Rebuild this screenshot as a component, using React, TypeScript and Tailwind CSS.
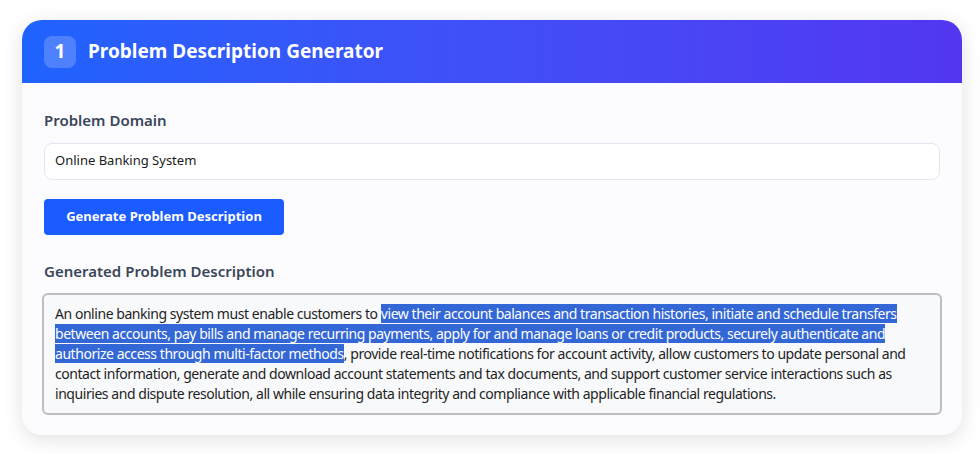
export default function App() {
  return (
    <div
      className="min-h-screen bg-white px-[22px] pt-5 pb-5"
      style={{ fontFamily: '"Noto Sans", "Open Sans", sans-serif' }}
    >
      <div className="w-[940px] overflow-hidden rounded-[20px] bg-[#fcfcfe] shadow-[0_4px_20px_rgba(0,0,0,0.12)]">
        <div className="flex h-[63px] items-center gap-3 bg-gradient-to-r from-[#1e63fe] to-[#5236f1] px-[22px]">
          <div className="flex h-8 w-8 items-center justify-center rounded-lg bg-white/20 text-[19px] font-bold text-white">
            1
          </div>
          <h1 className="text-[19px] font-bold text-white">Problem Description Generator</h1>
        </div>

        <div className="px-[22px] pt-[26px] pb-[20px]">
          <label className="block text-[15px] font-semibold text-[#3a4659]">Problem Domain</label>
          <div className="mt-[11px] flex h-[37px] items-center rounded-lg border border-[#e2e4f0] bg-white px-[10px] text-[13px] text-[#1b1b1b]">
            Online Banking System
          </div>

          <button className="mt-[19px] h-9 w-[240px] rounded-[4px] bg-[#1a5cff] text-[13px] font-bold text-white">
            Generate Problem Description
          </button>

          <label className="mt-[25px] block text-[15px] font-semibold text-[#3a4659]">
            Generated Problem Description
          </label>
          <div className="mt-[11px] -mx-[2px] whitespace-nowrap rounded-md border-2 border-[#bdbdbd] bg-[#f8f9fb] px-[11px] pt-[9px] pb-[9px] text-[14px] leading-[20px] tracking-[-0.45px] text-[#1f1f1f]">
            An online banking system must enable customers to{" "}
            <span className="bg-[#3367d6] text-white">
              view their account balances and transaction histories, initiate and schedule transfers{" "}
              <br />
              between accounts, pay bills and manage recurring payments, apply for and manage loans or credit
              products, securely authenticate and{" "}
              <br />
              authorize access through multi-factor methods
            </span>
            , provide real-time notifications for account activity, allow customers to update personal and
            <br />
            contact information, generate and download account statements and tax documents, and support customer
            service interactions such as
            <br />
            inquiries and dispute resolution, all while ensuring data integrity and compliance with applicable
            financial regulations.
          </div>
        </div>
      </div>
    </div>
  );
}
